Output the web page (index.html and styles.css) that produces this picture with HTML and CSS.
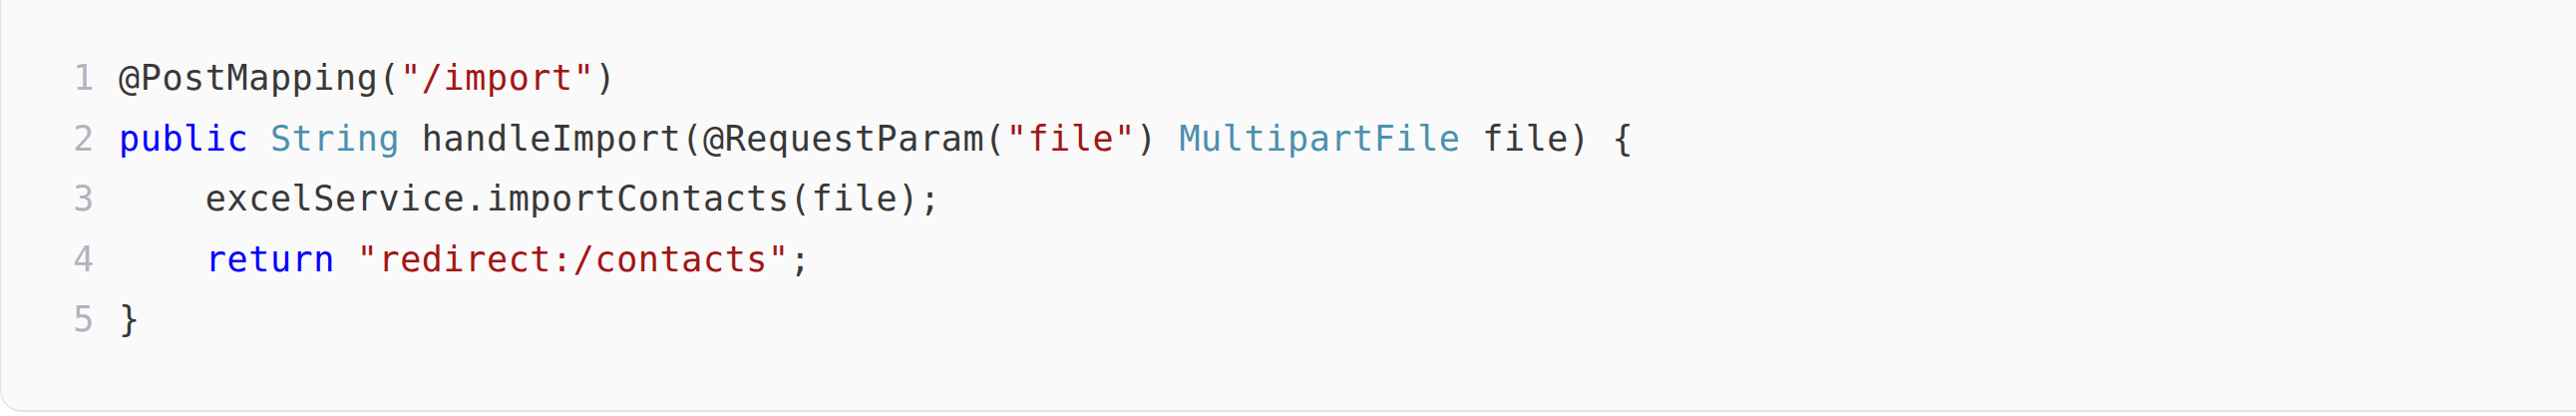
FILE: index.html
```html
<!DOCTYPE html>
<html lang="en">
<head>
<meta charset="utf-8">
<title>Code</title>
<link rel="stylesheet" href="styles.css">
</head>
<body>
<div class="card">
  <pre class="code"><div class="line"><span class="ln">1</span><span class="src"><span class="an">@PostMapping(</span><span class="st">"/import"</span>)</span></div><div class="line"><span class="ln">2</span><span class="src"><span class="kw">public</span> <span class="ty">String</span> handleImport(@RequestParam(<span class="st">"file"</span>) <span class="ty">MultipartFile</span> file) {</span></div><div class="line"><span class="ln">3</span><span class="src">    excelService.importContacts(file);</span></div><div class="line"><span class="ln">4</span><span class="src">    <span class="kw">return</span> <span class="st">"redirect:/contacts"</span>;</span></div><div class="line"><span class="ln">5</span><span class="src">}</span></div></pre>
</div>
</body>
</html>
```

FILE: styles.css
```css
html, body {
  margin: 0;
  padding: 0;
  background: #ffffff;
}
body {
  height: 417px;
  overflow: hidden;
}
.card {
  box-sizing: border-box;
  height: 413px;
  width: 2600px;
  background: #fafafa;
  border-left: 1px solid #e1e1e6;
  border-bottom: 2px solid #e1e1e6;
  border-bottom-left-radius: 22px;
  padding: 48px 0 0 72px;
}
.code {
  margin: 0;
  font-family: "DejaVu Sans Mono", "Liberation Mono", monospace;
  font-size: 35px;
  letter-spacing: 0.63px;
  line-height: 60.6px;
  color: #383838;
}
.line {
  display: flex;
  gap: 24px;
}
.ln {
  width: 22px;
  text-align: right;
  color: #b3b3bf;
}
.src {
  white-space: pre;
}
.kw { color: #0000ff; }
.ty { color: #4a90b0; }
.st { color: #a31515; }
.an { color: #383838; }
```
